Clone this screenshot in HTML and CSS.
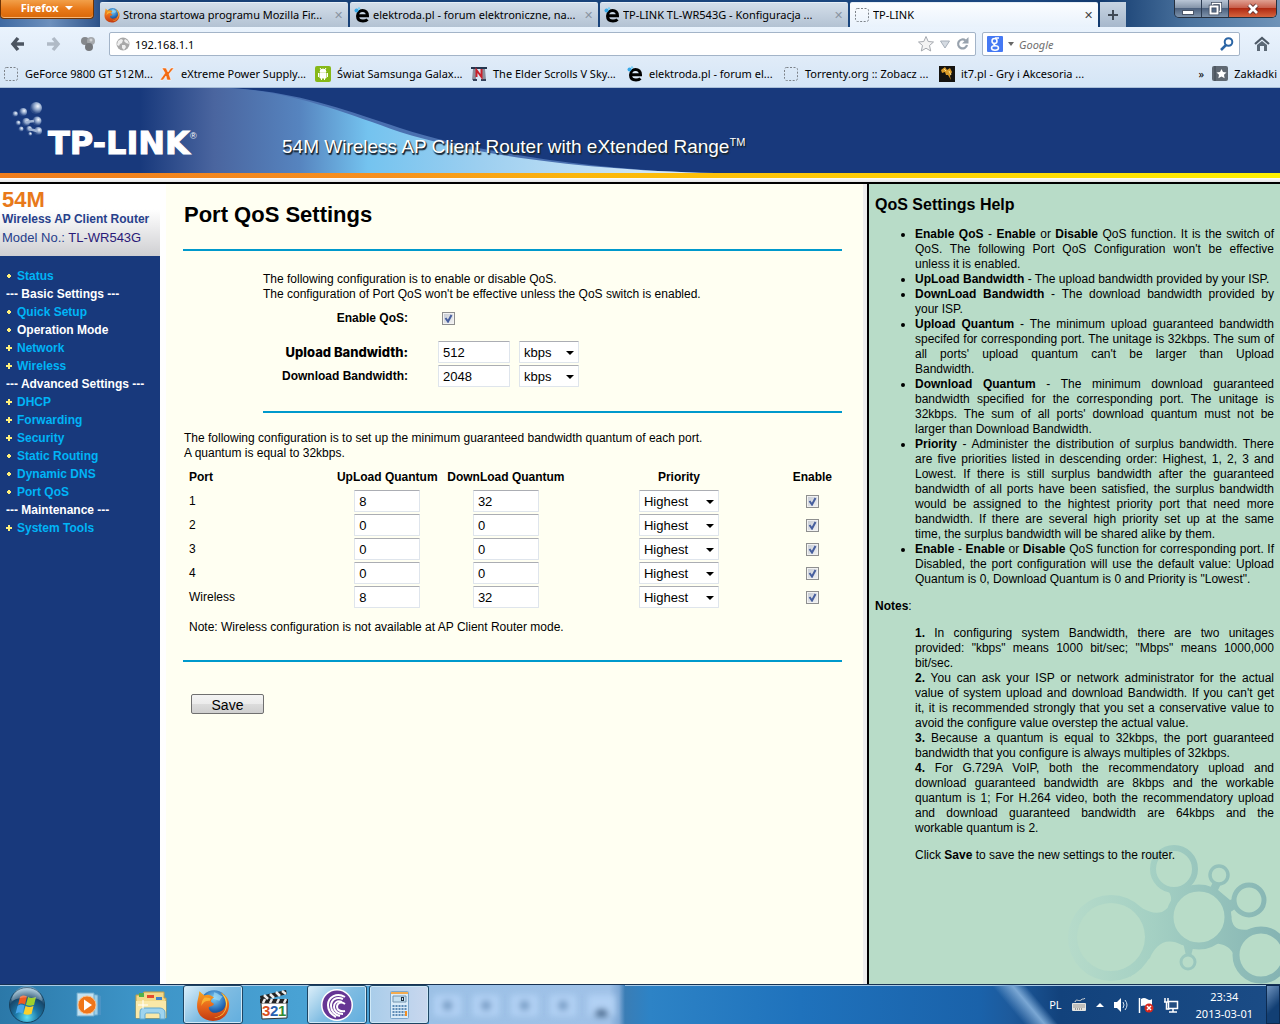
FILE: index.html
```html
<!DOCTYPE html>
<html lang="pl">
<head>
<meta charset="utf-8">
<title>TP-LINK</title>
<link rel="stylesheet" href="styles.css">
</head>
<body>
<svg class="defs" aria-hidden="true">
  <defs>
    <radialGradient id="globe" cx=".5" cy=".3" r=".7"><stop offset="0" stop-color="#7fd0f5"/><stop offset=".6" stop-color="#2468b4"/><stop offset="1" stop-color="#0b2a66"/></radialGradient>
    <linearGradient id="fox" x1="0" y1="0" x2="0" y2="1"><stop offset="0" stop-color="#f6a821"/><stop offset=".5" stop-color="#e8671b"/><stop offset="1" stop-color="#c03a10"/></linearGradient>
    <radialGradient id="ball" cx=".65" cy=".35" r=".6"><stop offset="0" stop-color="#f4f8ff"/><stop offset=".5" stop-color="#93a9cc"/><stop offset="1" stop-color="#2c4b88"/></radialGradient>
    <symbol id="i-firefox" viewBox="0 0 32 32">
      <circle cx="17" cy="15" r="13" fill="url(#globe)"/>
      <path d="M17 4c4 1 5 3 8 4l-3 4-6-2z" fill="#a8e2fa" opacity=".6"/>
      <path d="M3 3c2 1 3 3 5 4 2-1 4-1 6 0l3 2c-2 1-3 2-3 4l3 2c-1 2-3 2-5 3 0 4 4 6 8 5 5-1 8-4 8-9 0-4-2-7-5-10 6 3 9 8 8 14-1 8-7 13-15 13C7 31 1 25 1 17 1 11 3 8 3 3z" fill="url(#fox)"/>
      <path d="M24 5c4 3 6 7 5 12-1 7-6 11-12 11 5-1 10-4 11-10 1-5-1-9-4-13z" fill="#fcd54a"/>
      <path d="M8 9c-2 2-3 5-3 8 2-4 4-5 8-5l1-2c-2-1-4-1-6-1z" fill="#f9b233"/>
    </symbol>
    <symbol id="i-blank" viewBox="0 0 16 16"><rect x="1.500" y="1.500" width="13" height="13" rx="2" fill="none" stroke="#7c8289" stroke-dasharray="2 1.500"/></symbol>
    <symbol id="i-elektroda" viewBox="0 0 16 16"><path d="M3.500 8.800h10C13.500 5.500 11.500 3.500 8.500 3.500S3.500 6 3.500 9s2 5 5.500 5c2 0 3.500-.5 4.500-1.500" fill="none" stroke="#000" stroke-width="3"/><circle cx="2.500" cy="3.500" r="2" fill="#35a8e8"/><circle cx="5" cy="1.500" r="1.200" fill="#7bd0f5"/></symbol>
  </defs>
</svg>

<header class="chrome">
  <div class="tabstrip">
    <button class="fx-button" type="button">Firefox <span class="caret"></span></button>
    <div class="tab"><svg class="ico"><use href="#i-firefox"/></svg><a href="#">Strona startowa programu Mozilla Fir...</a><button type="button" aria-label="Zamknij">✕</button></div>
    <div class="tab"><svg class="ico"><use href="#i-elektroda"/></svg><a href="#">elektroda.pl - forum elektroniczne, na...</a><button type="button" aria-label="Zamknij">✕</button></div>
    <div class="tab"><svg class="ico"><use href="#i-elektroda"/></svg><a href="#">TP-LINK TL-WR543G - Konfiguracja ...</a><button type="button" aria-label="Zamknij">✕</button></div>
    <div class="tab active"><svg class="ico"><use href="#i-blank"/></svg><a href="#">TP-LINK</a><button type="button" aria-label="Zamknij">✕</button></div>
    <button class="newtab" type="button" aria-label="Nowa karta"><svg width="12" height="12"><path d="M6 1v10M1 6h10" stroke="#414a55" stroke-width="2"/></svg></button>
    <div class="winctl">
      <button type="button" aria-label="Minimalizuj"><svg width="14" height="14"><rect x="1.500" y="8.500" width="11" height="4" fill="#fff" stroke="#4a5568"/></svg></button>
      <button type="button" aria-label="Przywróć"><svg width="14" height="14" fill="none"><path d="M4.500 3.500v-2h8v8h-2" stroke="#3a475c" stroke-width="3"/><path d="M4.500 3.500v-2h8v8h-2" stroke="#fff" stroke-width="1.500"/><rect x="2.500" y="4.500" width="7" height="7" stroke="#3a475c" stroke-width="3.500"/><rect x="2.500" y="4.500" width="7" height="7" stroke="#fff" stroke-width="2"/></svg></button>
      <button class="close" type="button" aria-label="Zamknij okno"><svg width="14" height="14"><path d="M3 3l8 8M11 3l-8 8" stroke="#5a2a2a" stroke-width="4.500"/><path d="M3 3l8 8M11 3l-8 8" stroke="#fff" stroke-width="2.800"/></svg></button>
    </div>
  </div>
  <div class="navbar">
    <button class="nav" type="button" aria-label="Wstecz"><svg width="16" height="16"><path d="M8 2L3 8l5 6M3 8h11" fill="none" stroke="#4c5561" stroke-width="3.500"/></svg></button>
    <button class="nav" type="button" aria-label="Dalej"><svg width="16" height="16"><path d="M8 2l5 6-5 6M13 8H2" fill="none" stroke="#b0bac6" stroke-width="3.500"/></svg></button>
    <button class="nav" type="button" aria-label="Dodatek"><svg width="16" height="16"><circle cx="5" cy="5" r="4" fill="#85888c"/><circle cx="11" cy="5" r="4" fill="#a5a8ac"/><circle cx="9" cy="11" r="4" fill="#75787c"/><circle cx="11" cy="4" r="1.500" fill="#d0d2d4"/></svg></button>
    <div class="urlbar">
      <svg class="globe" width="14" height="14"><circle cx="7" cy="7" r="6.500" fill="#a8a8a8"/><path d="M2 4l3-2 2 1-1 3-2 1-1 2-2-1zM9 2l3 2 1 3-3-1-2-2zM6 8l3 0 1 2-2 3-2-2z" fill="#eee"/></svg>
      <input type="text" value="192.168.1.1" aria-label="Adres">
      <svg width="54" height="18"><path d="M9 1.500l2.200 5 5.300.5-4 3.500 1.200 5.500L9 13.200 4.300 16l1.200-5.500-4-3.500 5.300-.5z" fill="#f4f4f4" stroke="#a5a9af"/><path d="M23.500 6h9L28 13z" fill="#d5dbe2" stroke="#a8b0ba"/><path d="M48.500 5.500A4.500 4.500 0 1 0 50 10" fill="none" stroke="#98a2ad" stroke-width="2.200"/><path d="M45 8.500h6.500V2z" fill="#98a2ad"/></svg>
    </div>
    <div class="search">
      <svg width="28" height="16"><rect width="16" height="16" rx="1" fill="#4579f4"/><g fill="none" stroke="#fff" stroke-width="1.500"><circle cx="7.500" cy="5" r="2.500"/><ellipse cx="8" cy="12" rx="3.500" ry="2.200"/><path d="M12 2H8M8 7.500c-2 1-1 1.500.5 2.200"/></g><path d="M21 6h6l-3 4z" fill="#666"/></svg>
      <input type="text" placeholder="Google" aria-label="Szukaj">
      <svg width="14" height="14"><circle cx="8.500" cy="5" r="3.800" fill="none" stroke="#2b65a5" stroke-width="2"/><path d="M6 8l-5 5" stroke="#2b65a5" stroke-width="2.500"/></svg>
    </div>
    <button class="nav home" type="button" aria-label="Strona domowa"><svg width="16" height="16"><path d="M1 8l7-6 7 6" fill="none" stroke="#4d5966" stroke-width="2.200"/><path d="M3 9l5-4 5 4v6h-3v-5H6v5H3z" fill="#5c6976"/></svg></button>
  </div>
  <nav class="bookmarks">
    <a href="#"><svg class="ico"><use href="#i-blank"/></svg>GeForce 9800 GT 512M...</a>
    <a href="#"><svg class="ico"><path d="M3 2h4l2 4 3-4h3l-5 6 2 6H8L7 10l-3 4H1l5-7z" fill="#f26a12" stroke="#fff" stroke-width=".5"/></svg>eXtreme Power Supply...</a>
    <a href="#"><svg class="ico"><rect width="16" height="16" rx="2" fill="#86b817"/><path d="M5 7h6v5H5zM5 6a3 3 0 0 1 6 0zM3.500 7v4M12.500 7v4M6.500 11v3M9.500 11v3M5 2l1.500 2M11 2L9.500 4" fill="#fff" stroke="#fff"/></svg>Świat Samsunga Galax...</a>
    <a href="#"><svg class="ico"><path d="M0 1h16v2H0z" fill="#25364f"/><path d="M2 3h3v11H1zM11 3h3l1 11h-4z" fill="#8c8f9b"/><path d="M2 14h4M10 14h5" stroke="#34415b" stroke-width="2"/><path d="M5.500 11V4l5 7V3" fill="none" stroke="#c8202a" stroke-width="2"/></svg>The Elder Scrolls V Sky...</a>
    <a href="#"><svg class="ico"><use href="#i-elektroda"/></svg>elektroda.pl - forum el...</a>
    <a href="#"><svg class="ico"><use href="#i-blank"/></svg>Torrenty.org :: Zobacz ...</a>
    <a href="#"><svg class="ico"><rect width="16" height="16" fill="#151310"/><path d="M2 4l4-3 2 3 3-2 2 4-2 4 1 4-3-5-2 0-1-3-3 1z" fill="#d99a28"/><path d="M5 3l2 2M10 5l2 4" stroke="#fbe08a"/></svg>it7.pl - Gry i Akcesoria ...</a>
    <div class="bm-right"><span>»</span><button type="button"><svg class="ico"><rect width="16" height="15" rx="2" fill="#5f6872"/><path d="M3 0v15" stroke="#3f4750"/><path d="M9.500 3l1.500 3 3.500.4-2.500 2.400.6 3.500-3.100-1.700-3.100 1.700.6-3.500L4.500 6.400 8 6z" fill="#fff"/></svg>Zakładki</button></div>
  </nav>
</header>

<section class="banner">
  <svg class="wave" width="720" height="85" viewBox="0 0 720 85" aria-hidden="true">
    <defs><linearGradient id="sky" gradientUnits="userSpaceOnUse" x1="140" y1="0" x2="710" y2="0"><stop offset="0" stop-color="#18397c"/><stop offset=".13" stop-color="#4a659f"/><stop offset=".28" stop-color="#5684bf"/><stop offset=".4" stop-color="#74c3ef"/><stop offset=".6" stop-color="#9dcff0"/><stop offset="1" stop-color="#e4f0fa"/></linearGradient></defs>
    <path d="M225 0C290 2 340 20 400 40C470 63 580 79 680 84L700 85H300z" fill="#4a70b0"/>
    <path d="M140 0H225C290 3 340 23 400 44C470 66 580 82 715 85H140z" fill="url(#sky)"/>
  </svg>
  <div class="brand">
    <svg width="32" height="36" aria-hidden="true"><g fill="url(#ball)"><circle cx="24" cy="7" r="6"/><circle cx="11" cy="11" r="4"/><circle cx="3" cy="13" r="2.800"/><circle cx="25" cy="20" r="4.500"/><circle cx="14" cy="21" r="4"/><circle cx="6" cy="22" r="2.500"/><circle cx="9" cy="28" r="2.500"/><circle cx="17" cy="28" r="3"/><circle cx="26" cy="30" r="4"/><circle cx="18" cy="33" r="2"/></g><path d="M14 21l8-1M17 28l8 2" stroke="#9fb3d3" stroke-width="2.500"/></svg>
    <strong>TP-LINK<sup>®</sup></strong>
  </div>
  <p class="slogan">54M Wireless AP Client Router with eXtended Range<sup>TM</sup></p>
</section>

<div class="frames">
  <aside class="sidebar">
    <div class="model">
      <strong class="m54">54M</strong>
      <strong class="mname">Wireless AP Client Router</strong>
      <span class="mno">Model No.: <b>TL-WR543G</b></span>
    </div>
    <ul class="menu">
      <li><i class="dot"></i><a href="#">Status</a></li>
      <li class="head">--- Basic Settings ---</li>
      <li><i class="dot"></i><a href="#">Quick Setup</a></li>
      <li><i class="dot"></i><a class="on" href="#">Operation Mode</a></li>
      <li><i class="plus"></i><a href="#">Network</a></li>
      <li><i class="plus"></i><a href="#">Wireless</a></li>
      <li class="head">--- Advanced Settings ---</li>
      <li><i class="plus"></i><a href="#">DHCP</a></li>
      <li><i class="plus"></i><a href="#">Forwarding</a></li>
      <li><i class="plus"></i><a href="#">Security</a></li>
      <li><i class="dot"></i><a href="#">Static Routing</a></li>
      <li><i class="dot"></i><a href="#">Dynamic DNS</a></li>
      <li><i class="dot"></i><a href="#">Port QoS</a></li>
      <li class="head">--- Maintenance ---</li>
      <li><i class="plus"></i><a href="#">System Tools</a></li>
    </ul>
  </aside>

  <main class="content">
    <h1>Port QoS Settings</h1>
    <form>
      <section class="switch">
        <p>The following configuration is to enable or disable QoS.<br>The configuration of Port QoS won't be effective unless the QoS switch is enabled.</p>
        <div class="field"><label for="qos">Enable QoS:</label><input id="qos" type="checkbox" checked></div>
        <div class="field first"><label class="heavy" for="up">Upload Bandwidth:</label><input id="up" type="text" value="512"><select aria-label="Upload unit"><option>kbps</option><option>Mbps</option></select></div>
        <div class="field"><label for="down">Download Bandwidth:</label><input id="down" type="text" value="2048"><select aria-label="Download unit"><option>kbps</option><option>Mbps</option></select></div>
      </section>
      <p class="intro">The following configuration is to set up the minimum guaranteed bandwidth quantum of each port.<br>A quantum is equal to 32kbps.</p>
      <table class="ports">
        <colgroup><col class="c-port"><col class="c-q"><col class="c-q"><col class="c-pri"><col class="c-en"></colgroup>
        <thead><tr><th>Port</th><th>UpLoad Quantum</th><th>DownLoad Quantum</th><th>Priority</th><th>Enable</th></tr></thead>
        <tbody>
          <tr><td>1</td><td><input type="text" value="8" aria-label="Upload 1"></td><td><input type="text" value="32" aria-label="Download 1"></td><td><select aria-label="Priority 1"><option>Highest</option></select></td><td><input type="checkbox" checked aria-label="Enable 1"></td></tr>
          <tr><td>2</td><td><input type="text" value="0" aria-label="Upload 2"></td><td><input type="text" value="0" aria-label="Download 2"></td><td><select aria-label="Priority 2"><option>Highest</option></select></td><td><input type="checkbox" checked aria-label="Enable 2"></td></tr>
          <tr><td>3</td><td><input type="text" value="0" aria-label="Upload 3"></td><td><input type="text" value="0" aria-label="Download 3"></td><td><select aria-label="Priority 3"><option>Highest</option></select></td><td><input type="checkbox" checked aria-label="Enable 3"></td></tr>
          <tr><td>4</td><td><input type="text" value="0" aria-label="Upload 4"></td><td><input type="text" value="0" aria-label="Download 4"></td><td><select aria-label="Priority 4"><option>Highest</option></select></td><td><input type="checkbox" checked aria-label="Enable 4"></td></tr>
          <tr><td>Wireless</td><td><input type="text" value="8" aria-label="Upload wireless"></td><td><input type="text" value="32" aria-label="Download wireless"></td><td><select aria-label="Priority wireless"><option>Highest</option></select></td><td><input type="checkbox" checked aria-label="Enable wireless"></td></tr>
        </tbody>
      </table>
      <p class="note">Note: Wireless configuration is not available at AP Client Router mode.</p>
      <button class="save" type="button">Save</button>
    </form>
  </main>

  <aside class="help">
    <svg class="bubbles" width="213" height="140" viewBox="1067 844 213 140" aria-hidden="true">
      <defs><linearGradient id="bub" gradientUnits="userSpaceOnUse" x1="1067" y1="0" x2="1280" y2="0"><stop offset="0" stop-color="#b6dbca"/><stop offset=".4" stop-color="#a4d0c3"/><stop offset="1" stop-color="#85b4b3"/></linearGradient></defs>
      <g fill="url(#bub)">
        <circle cx="1111" cy="938" r="43"/>
        <path d="M1128 899C1142 908 1150 915 1162 912C1170 908 1174 900 1170 893L1195 895V940L1182 945C1165 936 1155 946 1150 958L1130 977z"/>
        <path d="M1160 886C1172 890 1174 900 1168 912L1195 895V888C1190 888 1190 884 1194 876z"/>
        <path d="M1208 892l5-10 8 2-3 6 12 10 8-3v10l-9 6z"/>
        <path d="M1222 905L1231 915C1232 930 1240 932 1256 928L1236 967C1236 952 1228 942 1212 944z"/>
        <path d="M1183 942l3 14h5l3-12z"/>
      </g>
      <g fill="#b8dcc8" stroke="url(#bub)"><circle cx="1111" cy="937" r="34" stroke="none"/><circle cx="1174" cy="869" r="21" stroke-width="6"/><circle cx="1199" cy="917" r="29" stroke-width="7"/><circle cx="1219" cy="875" r="9" stroke-width="3.500"/><circle cx="1249" cy="900" r="15" stroke-width="5"/><circle cx="1261" cy="955" r="25" stroke-width="7"/><circle cx="1188" cy="962" r="7" stroke-width="3"/></g>
    </svg>
    <h2>QoS Settings Help</h2>
    <ul>
      <li><b>Enable QoS</b> - <b>Enable</b> or <b>Disable</b> QoS function. It is the switch of QoS. The following Port QoS Configuration won't be effective unless it is enabled.</li>
      <li><b>UpLoad Bandwidth</b> - The upload bandwidth provided by your ISP.</li>
      <li><b>DownLoad Bandwidth</b> - The download bandwidth provided by your ISP.</li>
      <li><span class="full"><b>Upload Quantum</b> - The minimum upload guaranteed bandwidth specifed for corresponding port. The unitage is 32kbps. The sum of all ports' upload quantum can't be larger than Upload</span> Bandwidth.</li>
      <li><span class="full"><b>Download Quantum</b> - The minimum download guaranteed bandwidth specified for the corresponding port. The unitage is 32kbps. The sum of all ports' download quantum must not be</span> larger than Download Bandwidth.</li>
      <li><span class="full"><b>Priority</b> - Administer the distribution of surplus bandwidth. There are five priorities listed in descending order: Highest, 1, 2, 3 and Lowest. If there is still surplus bandwidth after the guaranteed bandwidth of all ports have been satisfied, the surplus bandwidth would be assigned to the hightest priority port that need more bandwidth. If there are several high priority set up at the same</span> time, the surplus bandwidth will be shared alike by them.</li>
      <li><b>Enable</b> - <b>Enable</b> or <b>Disable</b> QoS function for corresponding port. If Disabled, the port configuration will use the default value: Upload Quantum is 0, Download Quantum is 0 and Priority is "Lowest".</li>
    </ul>
    <p><b>Notes</b>:</p>
    <div class="notes">
      <p><b>1.</b> In configuring system Bandwidth, there are two unitages provided: "kbps" means 1000 bit/sec; "Mbps" means 1000,000 bit/sec.</p>
      <p><span class="full"><b>2.</b> You can ask your ISP or network administrator for the actual value of system upload and download Bandwidth. If you can't get<br>it, it is recommended strongly that you set a conservative value to</span> avoid the configure value overstep the actual value.</p>
      <p><b>3.</b> Because a quantum is equal to 32kbps, the port guaranteed bandwidth that you configure is always multiples of 32kbps.</p>
      <p><span class="full"><b>4.</b> For G.729A VoIP, both the recommendatory upload and download guaranteed bandwidth are 8kbps and the workable quantum is 1; For H.264 video, both the recommendatory upload and download guaranteed bandwidth are 64kbps and the</span> workable quantum is 2.</p>
      <p class="last">Click <b>Save</b> to save the new settings to the router.</p>
    </div>
  </aside>
</div>

<footer class="taskbar">
  <button class="orb" type="button" aria-label="Start"><svg width="38" height="38"><defs><radialGradient id="orb" cx=".5" cy=".85" r=".8"><stop offset="0" stop-color="#5fe0f4"/><stop offset=".4" stop-color="#1c78a8"/><stop offset=".75" stop-color="#17476b"/><stop offset="1" stop-color="#8fb6cc"/></radialGradient></defs><circle cx="19" cy="19" r="17.500" fill="url(#orb)" stroke="#17425f"/><path d="M12 11c2-1.500 4-2 7-.5l-2 8c-3-1.500-5-1-7 .5z" fill="#ee5b22"/><path d="M20 11c3 1.500 5 1 8 0l-2 8c-3 1-5 1-8 0z" fill="#9fd22e"/><path d="M9.500 20c2-1.500 4-2 7-.5l-2 8c-3-1.500-5-1-7 .5z" fill="#47a5ea"/><path d="M17.500 20c3 1.500 5 1 8 0l-2 8c-3 1-5 1-8 0z" fill="#fcd02c"/><path d="M4 15a15 15 0 0 1 30 0c-10-5-20-5-30 0z" fill="#fff" opacity=".25"/></svg></button>
  <button class="app" type="button" aria-label="Windows Media Player"><svg width="28" height="28"><path d="M5 2l18 2v20l-18 1z" fill="#9fd0e8" stroke="#5d9ec4"/><path d="M23 4l3 1v19l-3 0z" fill="#4b93c4"/><path d="M2 2h17v23H2z" fill="#c3e1f0" stroke="#6ba9cc"/><circle cx="12" cy="14" r="9" fill="#f0761a" stroke="#fbc08a"/><path d="M9 8.500l8 5.500-8 5.500z" fill="#fff"/></svg></button>
  <button class="app" type="button" aria-label="Eksplorator"><svg width="34" height="30"><path d="M2 5h6l2-3h20v6h2v20H2z" fill="#f2d98a" stroke="#c29d45"/><path d="M5 3h5v4H5z" fill="#50b04a"/><path d="M13 5h7v3h-7z" fill="#e5482d"/><path d="M22 7h6v3h-6z" fill="#3d83cc"/><path d="M2 11h30v17H2z" fill="#f9e8a8"/><path d="M6 29v-7c0-3 2-4 5-4h14c4 0 6 2 6 5v6h-5v-4c0-2-1-2-3-2H14c-2 0-3 0-3 2v4z" fill="#9ed4ef" stroke="#5ea7d0"/><path d="M9 10v9M4 15h10" stroke="#fff"/></svg></button>
  <button class="app open" type="button" aria-label="Firefox"><svg width="34" height="34"><use href="#i-firefox"/></svg></button>
  <button class="app" type="button" aria-label="Media Player Classic"><svg width="32" height="32"><path d="M2 14h26v15l-25 1z" fill="#fff" stroke="#333"/><path d="M1 7l26-6 1 4L2 12z" fill="#222"/><path d="M1 10h28v4H1z" fill="#222"/><path d="M5 6l4 4M11 5l4 4M17 3l4 4M23 2l4 3M6 10l-2 4M13 10l-2 4M20 10l-2 4M27 10l-2 4" stroke="#eee" stroke-width="2.500"/><g font-family="Liberation Sans" font-weight="bold" font-size="15"><text x="3" y="27" fill="#d8501e">3</text><text x="11" y="27" fill="#2760b0">2</text><text x="19" y="27" fill="#338a33">1</text></g></svg></button>
  <button class="app open" type="button" aria-label="BitTorrent"><svg width="34" height="34"><circle cx="17" cy="17" r="16" fill="#fff"/><circle cx="17" cy="17" r="14.500" fill="#663594"/><g fill="none" stroke="#fff" stroke-width="2"><path d="M25 9c-8-5-17 0-17 8 0 6 4 10 8 12"/><path d="M23 11c-7-3-12 1-12 7 0 5 4 9 9 10"/><path d="M22 14c-5-2-8 1-8 5 0 4 4 7 9 7"/><path d="M25 16c-4-3-8-1-8 3 0 3 4 5 8 4"/></g></svg></button>
  <button class="app open calc" type="button" aria-label="Kalkulator"><svg width="24" height="30"><rect x="3.500" y="1.500" width="18" height="27" rx="1" fill="#d9ebf9" stroke="#7ba6cc"/><path d="M4 2h17v2H4z" fill="#f3ac50"/><path d="M6 6h13v6H6z" fill="#c4dff0" stroke="#7394b0"/><rect x="14.500" y="7.500" width="2" height="3" fill="none" stroke="#234"/><path d="M5.500 16h14M5.500 19h14M5.500 22h14M5.500 25h14" stroke="#5c8ab6" stroke-width="2" stroke-dasharray="2 1"/><path d="M18 21h2v5h-2z" fill="#f08c20"/></svg></button>
  <div class="glass" aria-hidden="true"><i></i><i></i><i></i><i></i><i></i></div>
  <div class="tray">
    <span>PL</span>
    <svg width="16" height="16"><path d="M4 5c1-4 4 0 6-2s3 0 4-2" fill="none" stroke="#ddd"/><rect x="1" y="6" width="14" height="8" rx="1" fill="#e4e4e0"/><path d="M2.500 8h11M2.500 10h11M4 12h8" stroke="#555" stroke-dasharray="1 1"/></svg>
    <svg width="8" height="5"><path d="M0 5l4-4 4 4z" fill="#fff"/></svg>
    <svg width="16" height="16"><path d="M1 5h3l4-4v14l-4-4H1z" fill="#fff"/><path d="M10 5q2 3 0 6M12 3q4 5 0 10" fill="none" stroke="#d5e3f0"/></svg>
    <svg width="16" height="16"><path d="M1.500 1v15" stroke="#fff" stroke-width="1.500"/><path d="M3 2q3-2 6 0t5 0v7q-2 1-5 0t-6 0z" fill="#fff"/><circle cx="11" cy="11" r="4.500" fill="#d8271c"/><path d="M9 9l4 4M13 9l-4 4" stroke="#fff" stroke-width="1.500"/></svg>
    <svg width="16" height="16"><path d="M5.500 4.500h9v7h-9z" fill="#234d80" stroke="#fff" stroke-width="1.500"/><path d="M10 12v3M6 15h8M2 1v4M5 1v4M1 5h5M3.500 5v7h3" fill="none" stroke="#fff" stroke-width="1.500"/></svg>
    <div class="clock"><span>23:34</span><span>2013-03-01</span></div>
    <button class="desk" type="button" aria-label="Pokaż pulpit"></button>
  </div>
</footer>
</body>
</html>
```
FILE: styles.css
```css
* { box-sizing: border-box; }
body {
  margin: 0;
  min-height: 100vh;
  display: flex;
  flex-direction: column;
  font: 12px/15px "Liberation Sans", Arial, sans-serif;
  color: #000;
  background: #fff;
}
button, input, select { font: inherit; color: inherit; margin: 0; }
button { border: 0; padding: 0; background: none; }
a { color: inherit; text-decoration: none; }
p, h1, h2, ul { margin: 0; padding: 0; }
svg { display: block; flex: none; }
.defs { position: absolute; width: 0; height: 0; }
.ico { width: 16px; height: 16px; }

/* browser window */
.chrome { font: 11px/16px "Noto Sans", "Open Sans", sans-serif; }
.tabstrip {
  display: flex;
  align-items: flex-end;
  gap: 2px;
  height: 27px;
  background: linear-gradient(90deg, #3f6aa3 0, #6d90bd 50px, #34598f 95px, #163e74 110px, #1b4780 80%, #123a6e 86%, #4c749f 93%, #6f93b8 100%);
}
.fx-button {
  align-self: flex-start;
  flex: none;
  width: 94px;
  height: 19px;
  margin-right: 4px;
  padding-bottom: 2px;
  border: 1px solid #6f3405;
  border-top: 0;
  border-radius: 0 0 4px 4px;
  background: linear-gradient(#f2a049, #e87a1a 50%, #d96708);
  color: #fff;
  font-weight: bold;
  line-height: 16px;
  box-shadow: inset 0 -1px #f8b878;
}
.caret {
  display: inline-block;
  margin: 0 0 2px 4px;
  border: 4px solid transparent;
  border-top-color: #fff;
  border-bottom: 0;
}
.tab {
  flex: 0 1 248px;
  min-width: 0;
  height: 25px;
  display: flex;
  align-items: center;
  gap: 3px;
  padding: 0 5px 0 4px;
  background: linear-gradient(#d3deea, #b3c2d3);
  border-top: 1px solid #e6eef6;
  border-radius: 2px 2px 0 0;
}
.tab a { flex: 1; overflow: hidden; white-space: nowrap; }
.tab button { color: #8a95a3; }
.tab.active { background: linear-gradient(#fbfdff, #e9f2fc); }
.tab.active button { color: #444; }
.newtab {
  flex: none;
  width: 26px;
  height: 25px;
  display: grid;
  place-items: center;
  background: linear-gradient(#c7d4e2, #a7b8cc);
}
.winctl {
  align-self: flex-start;
  display: flex;
  margin: 0 3px 0 auto;
  height: 18px;
  border: 1px solid #25303f;
  border-top: 0;
  border-radius: 0 0 5px 5px;
  overflow: hidden;
}
.winctl button {
  width: 27px;
  display: grid;
  place-items: center;
  border-right: 1px solid #2c3c52;
  background: linear-gradient(#b9c6d6, #8595aa 45%, #4c617e 50%, #7f93ab);
}
.winctl .close { width: 47px; border: 0; background: linear-gradient(#e0a192, #c8604c 45%, #b02a12 50%, #d5643e); }

.navbar {
  display: flex;
  align-items: center;
  height: 33px;
  padding: 1px 10px 0;
  background: linear-gradient(#eaf3fd, #dfebf8);
}
.nav { flex: none; width: 16px; margin-right: 19px; }
.navbar .home { margin: 0 0 0 14px; }
.urlbar, .search {
  display: flex;
  align-items: center;
  height: 24px;
  border: 1px solid #a3b4c8;
  border-radius: 2px;
  background: #fff;
}
.urlbar { flex: 1; min-width: 0; margin-left: -6px; padding: 0 4px 0 6px; gap: 5px; }
.search { flex: 0 1 258px; margin-left: 6px; padding: 0 5px 0 4px; gap: 4px; }
.urlbar input, .search input { flex: 1; min-width: 0; height: 20px; border: 0; padding: 0; background: none; outline: 0; }
.search input::placeholder { color: #707070; font-style: italic; }

.bookmarks {
  display: flex;
  align-items: center;
  height: 28px;
  padding: 0 3px;
  background: linear-gradient(#dfebf8, #d4e5f6);
  border-bottom: 1px solid #a9bfd8;
  white-space: nowrap;
}
.bookmarks a { display: flex; align-items: center; gap: 6px; flex: 0 0 156px; }
.bm-right { display: flex; align-items: center; gap: 8px; margin-left: auto; }
.bm-right button { display: flex; align-items: center; gap: 6px; }

/* router banner */
.banner {
  position: relative;
  height: 95px;
  display: flex;
  color: #fff;
  background:
    linear-gradient(90deg, #ef7d1c, #f6901f 30%, #fbb60c 45%, #ffcd05 68%, #fff200) 0 85px / 100% 5px no-repeat,
    linear-gradient(#fff 0, #e4e4e4 4px, #000 4px) 0 90px / 100% 5px no-repeat,
    #18397c;
}
.wave { position: absolute; left: 0; top: 0; }
.brand, .slogan { position: relative; }
.brand { flex: none; width: 282px; display: flex; padding: 13px 0 0 12px; }
.brand strong { font: bold 32px/34px "DejaVu Sans", sans-serif; margin: 25px 0 0 4px; -webkit-text-stroke: 1px #fff; }
.brand sup { font: 9px/9px "Liberation Sans", sans-serif; vertical-align: 15px; -webkit-text-stroke: 0; }
.slogan { font-size: 19px; line-height: 24px; padding-top: 47px; text-shadow: 1px 1px 1px #123, 1px 2px 1px #234; white-space: nowrap; }
.slogan sup { font-size: 11px; line-height: 12px; vertical-align: 7px; }

/* frameset */
.frames { flex: 1; display: flex; border-top: 1px solid #000; }
.sidebar { flex: none; width: 166px; border-right: 6px solid #fff; background: #18397c; }
.model {
  height: 72px;
  display: flex;
  flex-direction: column;
  padding: 5px 2px 0;
  color: #27408b;
  background: linear-gradient(#fff 35%, #cfcfd2);
  white-space: nowrap;
}
.m54 { color: #e8791a; font-size: 22px; line-height: 22px; }
.mname { line-height: 16px; }
.mno { font-size: 13px; line-height: 22px; }
.mno b { color: #2a1a78; font-weight: normal; }
.menu { list-style: none; padding: 11px 6px; font-weight: bold; line-height: 18px; color: #fff; }
.menu li { display: flex; align-items: center; gap: 5px; }
.menu a { color: #00b4f6; }
.menu .on { color: #fff; }
.dot, .plus { width: 6px; height: 6px; background: linear-gradient(#ffef7a, #ffef7a) center / 6px 2px no-repeat, linear-gradient(#ffef7a, #ffef7a) center / 2px 6px no-repeat; }
.dot { background: radial-gradient(circle, #ffef7a 2px, transparent 2px); }

.content {
  flex: 1;
  min-width: 0;
  padding: 18px 21px 0 17px;
  background: #fffff2;
  border-right: 4px solid #eee;
}
h1 { height: 49px; font-size: 22px; line-height: 26px; padding-left: 1px; border-bottom: 2px solid #0099cc; }
.switch { margin: 21px 0 0 80px; height: 141px; border-bottom: 2px solid #0099cc; }
.field { display: flex; align-items: center; height: 24px; }
.switch p { margin-bottom: 4px; }
.field label { width: 145px; margin-right: 30px; text-align: right; font-weight: bold; }
.field .heavy { font-family: Inter, sans-serif; font-size: 13px; font-weight: 800; }
.first { margin-top: 10px; }
.field select { width: 60px; margin-left: 9px; }
.field input[type=checkbox] { margin-left: 4px; }
input[type=text] { outline: 0; }
.content input[type=text], .content select {
  height: 22px;
  padding: 0 4px;
  border: 1px solid #dfe5ec;
  border-top-color: #abadb3;
  border-radius: 1px;
  background-color: #fff;
  font-size: 13px;
}
.content input[type=text] { width: 72px; }
.content select {
  appearance: none;
  background: #fff url("data:image/svg+xml,%3Csvg xmlns='http://www.w3.org/2000/svg' width='8' height='4'%3E%3Cpath d='M0 0h8L4 4z'/%3E%3C/svg%3E") right 4px top 9px no-repeat;
}
input[type=checkbox] {
  appearance: none;
  display: block;
  width: 13px;
  height: 13px;
  border: 1px solid #8e8f8f;
  background: url("data:image/svg+xml,%3Csvg xmlns='http://www.w3.org/2000/svg' width='11' height='11'%3E%3Cpath d='M2.500 5l2.500 3.500L8.500 2' fill='none' stroke='%23475f9e' stroke-width='2'/%3E%3C/svg%3E"), linear-gradient(135deg, #c4c9d2, #f4f4f4);
  box-shadow: inset 0 0 0 1px #f2f2f2;
}
.intro { margin: 18px 0 0 1px; }
.ports { width: 100%; margin-top: 4px; table-layout: fixed; border-collapse: collapse; }
.ports th, .ports td { height: 24px; padding: 0; white-space: nowrap; }
.ports th { text-align: center; }
.ports tr > :first-child { text-align: left; padding-left: 6px; }
.ports tr > :nth-child(4) { padding-left: 10px; }
.c-port { width: 22%; }
.c-q { width: 18%; }
.c-pri { width: 33%; }
.ports input[type=text] { display: block; width: 66px; margin: auto; }
.ports select { display: block; width: 80px; margin: auto; }
.ports input[type=checkbox] { margin: auto; }
.note { margin-top: 11px; padding: 0 6px 25px; border-bottom: 2px solid #0099cc; }
.save {
  width: 73px;
  height: 20px;
  margin: 32px 8px;
  border: 1px solid #707070;
  border-radius: 2px;
  background: linear-gradient(#f4f4f4, #ebebeb 50%, #dcdcdc 50%, #cfcfcf);
  font-size: 14px;
  line-height: 20px;
}

.help { position: relative; flex: none; width: 413px; padding: 12px 6px 0 6px; background: #b8dcc8; border-left: 2px solid #000; text-align: justify; }
.help > :not(.bubbles) { position: relative; }
.help .bubbles { position: absolute; right: 0; bottom: 0; }
h2 { font-size: 16px; line-height: 18px; margin-bottom: 13px; }
.help ul { padding-left: 40px; margin-bottom: 12px; }
.full { display: block; text-align-last: justify; }
.notes { padding-left: 40px; margin-top: 12px; }
.last { margin-top: 12px; }

/* taskbar */
.taskbar {
  display: flex;
  align-items: stretch;
  height: 40px;
  border-top: 1px solid #173252;
  box-shadow: inset 0 1px #a9cbe6;
  color: #fff;
  font: 11px/16px "Noto Sans", "Open Sans", sans-serif;
  background: linear-gradient(90deg, #2b78a8 0, #3c93c6 130px, #49a2d4 300px, #4a9fd6 430px, #3a7db5 625px, #2d83c6 650px, #1f72bc 800px, #1a62aa 980px, #1d5a9c 1010px, #12427c 1060px, #1b4c86 100%);
}
.orb { width: 54px; display: grid; place-items: center; }
.app { display: grid; place-items: center; width: 60px; margin-right: 2px; flex: none; }
.orb + .app { margin-left: 5px; }
.open { border: 1px solid #1d4564; border-radius: 3px; background: linear-gradient(135deg, #dceffa, #7fbce2 50%, #62aede); box-shadow: inset 0 0 0 1px #cfe8f7; }
.calc { margin-right: 0; background: linear-gradient(90deg, #a9cdea, #c9d7ee); }
.glass { flex: none; width: 196px; display: flex; gap: 12px; padding: 10px 10px 8px 5px; background: linear-gradient(90deg, #9cc1e6 0, #a0c2e8 180px, #7fa9d6 190px, #3a7db5 100%); }
.glass i { flex: 1; background: radial-gradient(circle, #6f94bd 3px, #b2d1f4 6px); filter: blur(3px); }
.glass i:last-child { background: radial-gradient(circle at 50% 100%, #2d4c6e 4px, #b2d1f4 8px); }
.tray { flex: 1; display: flex; align-items: center; justify-content: flex-end; gap: 9px; background: linear-gradient(50deg, transparent 58%, #7aa7d4 61%, #7aa7d400 63%); }
.clock { display: flex; flex-direction: column; text-align: center; margin-left: 8px; line-height: 17px; white-space: nowrap; }
.desk { align-self: stretch; width: 14px; margin-left: 4px; border: 1px solid #0c2a50; background: linear-gradient(135deg, #6f93bd, #123f74 60%); }
```
